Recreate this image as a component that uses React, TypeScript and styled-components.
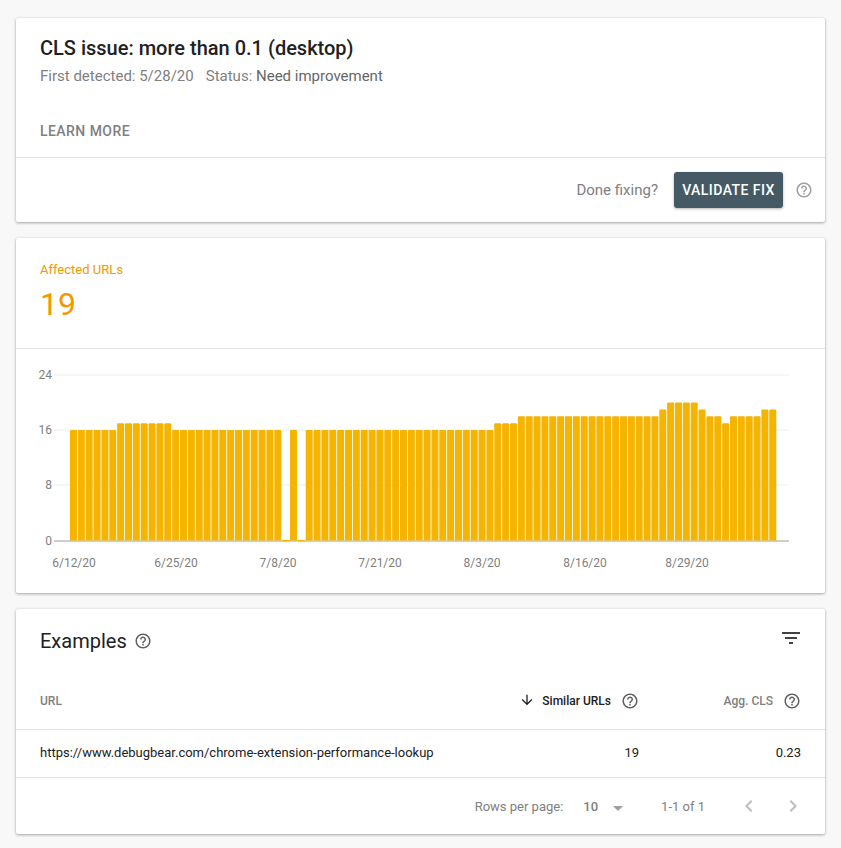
import React from "react";
import styled, { createGlobalStyle } from "styled-components";

const Global = createGlobalStyle`
  html, body { margin: 0; padding: 0; background: #f8f8f8; }
  body { font-family: Roboto, "Liberation Sans", sans-serif; width: 841px; height: 848px; overflow: hidden; }
`;

const Page = styled.div`
  display: flex;
  flex-direction: column;
  gap: 16px;
  padding: 18px 16px 0;
  width: 809px;
`;
const Card = styled.section<{ $h: number }>`
  height: ${(p) => p.$h}px;
  background: #fff;
  border-radius: 2px;
  box-shadow: 0 1px 3px rgba(60, 64, 67, 0.45), 0 0 2px rgba(60, 64, 67, 0.08);
  display: flex;
  flex-direction: column;
`;
const Head = styled.div`
  padding: 19px 24px 0;
  height: 140px;
  box-sizing: border-box;
  border-bottom: 1px solid #e2e2e2;
  flex: none;
`;
const Title = styled.h1`
  margin: 0;
  font-size: 20px;
  line-height: 23px;
  font-weight: 500;
  color: #212121;
`;
const Meta = styled.div`
  margin-top: 6px;
  font-size: 15px;
  line-height: 20px;
  color: #808080;
  display: flex;
  gap: 12px;
`;
const Emph = styled.span`
  color: #666666;
`;
const Learn = styled.div`
  margin-top: 37px;
  font-size: 14px;
  line-height: 16px;
  font-weight: 500;
  letter-spacing: 0.45px;
  color: #808080;
`;
const Actions = styled.div`
  flex: 1;
  display: flex;
  align-items: center;
  justify-content: flex-end;
  padding: 0 12px 0 0;
`;
const Done = styled.span`
  font-size: 15px;
  color: #808080;
  margin-right: 16px;
`;
const Validate = styled.button`
  border: 0;
  height: 36px;
  width: 109px;
  padding: 0;
  border-radius: 3px;
  background: #455a64;
  color: #fff;
  font: 500 14px Roboto, sans-serif;
  letter-spacing: 0.45px;
  box-shadow: 0 1px 3px rgba(60, 64, 67, 0.4);
  margin-right: 12px;
`;
const Glyph = styled.svg<{ $s: number; $c: string }>`
  width: ${(p) => p.$s}px;
  height: ${(p) => p.$s}px;
  fill: ${(p) => p.$c};
  flex: none;
  display: block;
`;
const Affected = styled.div`
  height: 111px;
  box-sizing: border-box;
  padding: 24px 24px 0;
  border-bottom: 1px solid #e2e2e2;
  color: #f29900;
  flex: none;
`;
const AffLabel = styled.div`
  font-size: 13px;
  line-height: 16px;
`;
const AffValue = styled.div`
  font-size: 32px;
  line-height: 38px;
  margin-top: 7px;
`;
const ChartSvg = styled.svg`
  display: block;
  width: 809px;
  height: 244px;
  text {
    font-family: Roboto, sans-serif;
    font-size: 12px;
    fill: #808080;
  }
`;
const ExHead = styled.div`
  height: 64px;
  box-sizing: border-box;
  padding: 0 22px 0 24px;
  display: flex;
  align-items: center;
  justify-content: space-between;
  flex: none;
`;
const ExTitleWrap = styled.div`
  display: flex;
  align-items: center;
  gap: 7px;
`;
const ExTitle = styled.h2`
  margin: 0;
  font-size: 20px;
  font-weight: 400;
  color: #212121;
`;
const FilterSlot = styled.div`
  margin-bottom: 6px;
`;
const Row = styled.div<{ $h: number; $head?: boolean }>`
  height: ${(p) => p.$h}px;
  box-sizing: border-box;
  border-bottom: 1px solid #e2e2e2;
  display: grid;
  grid-template-columns: 1fr 140px 162px;
  align-items: center;
  padding: 0 24px ${(p) => (p.$head ? 0 : 2)}px;
  flex: none;
  font-size: ${(p) => (p.$head ? 12 : 13)}px;
  color: #212121;
`;
const HeadCell = styled.div<{ $active?: boolean }>`
  display: flex;
  align-items: center;
  justify-content: flex-end;
  font-weight: 500;
  color: ${(p) => (p.$active ? "#212121" : "#808080")};
`;
const UrlHead = styled(HeadCell)`
  justify-content: flex-start;
`;
const HelpGap = styled.span`
  margin-left: 10px;
`;
const ArrowGap = styled.span`
  margin: 0 7px 2px 0;
`;
const NumCell = styled.div`
  text-align: right;
`;
const Pager = styled.div`
  flex: 1;
  display: flex;
  align-items: center;
  justify-content: flex-end;
  font-size: 13px;
  color: #808080;
  padding-right: 20px;
`;
const PerPage = styled.span`
  font-weight: 500;
  margin-left: 20px;
`;
const Range = styled.span`
  margin-left: 31px;
  margin-right: 32px;
`;
const Caret = styled.span`
  margin: 3px 0 0 8px;
`;
const Next = styled.span`
  margin-left: 20px;
`;

const HELP =
  "M11 18h2v-2h-2v2zm1-16C6.48 2 2 6.48 2 12s4.48 10 10 10 10-4.48 10-10S17.52 2 12 2zm0 18c-4.41 0-8-3.59-8-8s3.59-8 8-8 8 3.59 8 8-3.59 8-8 8zm0-14c-2.21 0-4 1.79-4 4h2c0-1.1.9-2 2-2s2 .9 2 2c0 2-3 1.75-3 5h2c0-2.25 3-2.5 3-5 0-2.21-1.79-4-4-4z";

const Icon = ({ d, s, c }: { d: string; s: number; c: string }) => (
  <Glyph viewBox="0 0 24 24" $s={s} $c={c}>
    <path d={d} />
  </Glyph>
);

const spec: [number, number][] = [
  [16, 6], [17, 7], [16, 14], [0, 1], [16, 1], [0, 1], [16, 24], [17, 3], [18, 18],
  [19, 1], [20, 4], [19, 1], [18, 2], [17, 1], [18, 4], [19, 2],
];
const values = spec.flatMap(([v, n]) => Array<number>(n).fill(v));

const X0 = 54;
const STEP = 7.857;
const BAR = 7;
const Y0 = 191.5; // baseline inside the chart (page y 540.5)
const UNIT = 6.9;
const ticks = [24, 16, 8, 0];
const dates: [string, number][] = [
  ["6/12/20", 58], ["6/25/20", 160], ["7/8/20", 262], ["7/21/20", 364],
  ["8/3/20", 466], ["8/16/20", 569], ["8/29/20", 671],
];

const Chart = () => (
  <ChartSvg viewBox="0 0 809 244">
    {ticks.map((t) => (
      <g key={t}>
        <rect x={38} y={Math.round(Y0 - t * UNIT) - 0.5} width={735} height={1} fill={t === 0 ? "#9e9e9e" : "#eeeeee"} />
        <text x={36} y={Y0 - t * UNIT + 4} textAnchor="end">{t}</text>
      </g>
    ))}
    {values.map((v, i) =>
      v > 0 ? (
        <path
          key={i}
          d={`M${X0 + i * STEP} ${Y0}V${Y0 - v * UNIT + 1}q0-1 1-1h${BAR - 2}q1 0 1 1V${Y0}z`}
          fill="#f4b400"
        />
      ) : (
        <rect key={i} x={X0 + i * STEP} y={Y0 - 0.5} width={BAR} height={1} fill="#f4b400" />
      )
    )}
    {dates.map(([d, x]) => (
      <text key={d} x={x} y={Y0 + 26} textAnchor="middle">{d}</text>
    ))}
  </ChartSvg>
);

export default function App() {
  return (
    <Page>
      <Global />
      <Card $h={204}>
        <Head>
          <Title>CLS issue: more than 0.1 (desktop)</Title>
          <Meta>
            <span>First detected: 5/28/20</span>
            <span>Status: <Emph>Need improvement</Emph></span>
          </Meta>
          <Learn>LEARN MORE</Learn>
        </Head>
        <Actions>
          <Done>Done fixing?</Done>
          <Validate>VALIDATE FIX</Validate>
          <Icon d={HELP} s={18} c="#9e9e9e" />
        </Actions>
      </Card>
      <Card $h={355}>
        <Affected>
          <AffLabel>Affected URLs</AffLabel>
          <AffValue>19</AffValue>
        </Affected>
        <Chart />
      </Card>
      <Card $h={225}>
        <ExHead>
          <ExTitleWrap>
            <ExTitle>Examples</ExTitle>
            <Icon d={HELP} s={18} c="#616161" />
          </ExTitleWrap>
          <FilterSlot>
            <Icon d="M10 18h4v-2h-4v2zM3 6v2h18V6H3zm3 7h12v-2H6v2z" s={24} c="#424242" />
          </FilterSlot>
        </ExHead>
        <Row $h={57} $head>
          <UrlHead>URL</UrlHead>
          <HeadCell $active>
            <ArrowGap><Icon d="M20 12l-1.41-1.41L13 16.17V4h-2v12.17l-5.58-5.59L4 12l8 8 8-8z" s={16} c="#212121" /></ArrowGap>
            Similar URLs
            <HelpGap><Icon d={HELP} s={18} c="#616161" /></HelpGap>
          </HeadCell>
          <HeadCell>
            Agg. CLS
            <HelpGap><Icon d={HELP} s={18} c="#616161" /></HelpGap>
          </HeadCell>
        </Row>
        <Row $h={48}>
          <div>https://www.debugbear.com/chrome-extension-performance-lookup</div>
          <NumCell>19</NumCell>
          <NumCell>0.23</NumCell>
        </Row>
        <Pager>
          <span>Rows per page:</span>
          <PerPage>10</PerPage>
          <Caret><Icon d="M7 10l5 5 5-5z" s={24} c="#9e9e9e" /></Caret>
          <Range>1-1 of 1</Range>
          <Icon d="M15.41 7.41L14 6l-6 6 6 6 1.41-1.41L10.83 12z" s={24} c="#bdbdbd" />
          <Next><Icon d="M10 6L8.59 7.41 13.17 12l-4.58 4.59L10 18l6-6z" s={24} c="#bdbdbd" /></Next>
        </Pager>
      </Card>
    </Page>
  );
}
